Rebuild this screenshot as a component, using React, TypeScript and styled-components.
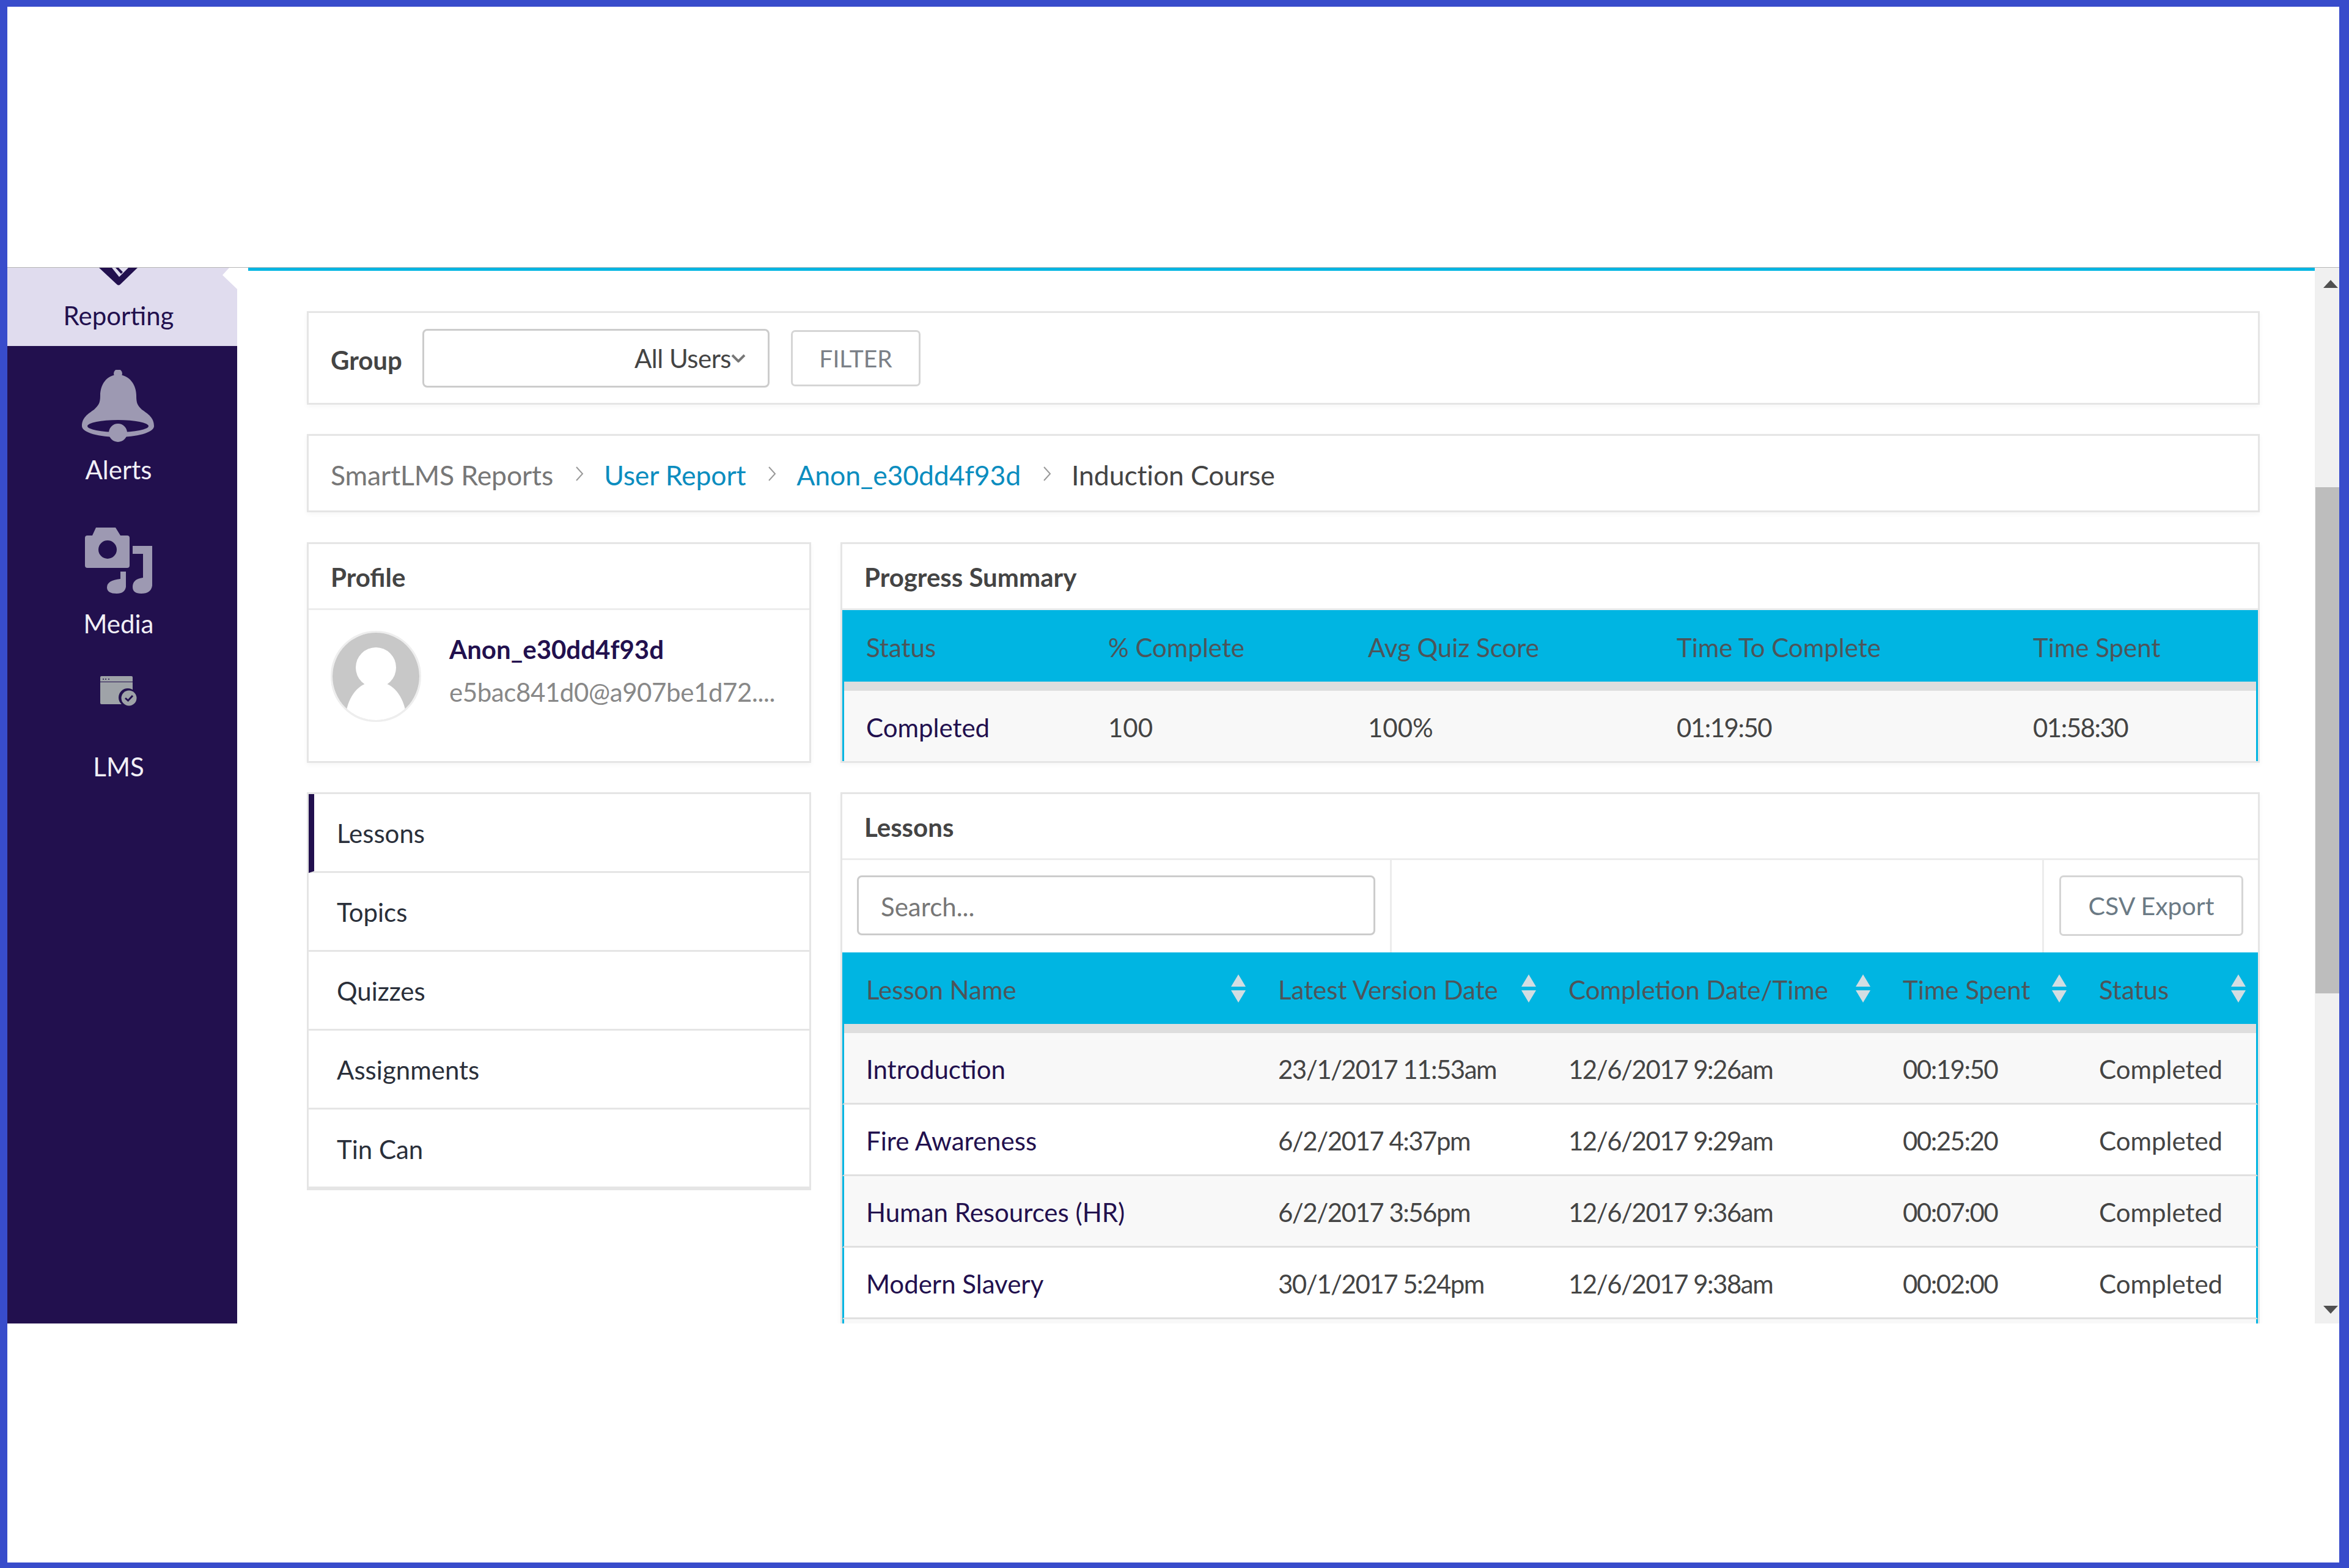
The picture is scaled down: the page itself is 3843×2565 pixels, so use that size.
import React from 'react';
import styled, { createGlobalStyle } from 'styled-components';

const FONT = `Lato, "Open Sans", "Liberation Sans", sans-serif`;
const CYAN = '#00b5e2';
const PURPLE = '#22104e';
const LINE = '#e5e5e5';

const GlobalStyle = createGlobalStyle`
  html, body { margin: 0; padding: 0; background: #fff; }
  body {
    font-family: ${FONT};
    font-size: 42px;
    color: #444;
  }
  * { box-sizing: border-box; }
`;

const Frame = styled.div`
  width: 3843px;
  height: 2565px;
  border-style: solid;
  border-color: #384ccb;
  border-width: 11px 16px 9px 12px;
  background: #fff;
  display: flex;
  flex-direction: column;
  overflow: hidden;
`;

const TopBlank = styled.div`
  height: 427px;
  flex: none;
  border-bottom: 1px solid #b5b5b5;
`;

const Shell = styled.div`
  height: 1727px;
  flex: none;
  display: flex;
  overflow: hidden;
`;

const Sidebar = styled.nav`
  width: 376px;
  flex: none;
  background: ${PURPLE};
  display: flex;
  flex-direction: column;
  padding-right: 12px;
`;

const ReportingItem = styled.div`
  position: relative;
  height: 128px;
  margin-right: -12px;
  padding-right: 12px;
  background: #e0dcee;
  color: ${PURPLE};
  display: flex;
  flex-direction: column;
  align-items: center;

  &::after {
    content: '';
    position: absolute;
    top: 0;
    right: 0;
    width: 24px;
    height: 35px;
    background: #fff;
    clip-path: polygon(11px 0, 0 12px, 24px 35px, 24px 0);
  }
`;

const ReportingLabel = styled.span`
  margin-top: 23px;
  line-height: 50px;
`;

const SideItem = styled.div<{ $top: number; $gap: number }>`
  margin-top: ${(p) => p.$top}px;
  display: flex;
  flex-direction: column;
  align-items: center;
  gap: ${(p) => p.$gap}px;
  color: #f1eff6;
  line-height: 50px;
`;

const Content = styled.main`
  flex: 1;
  min-width: 0;
  overflow: hidden;
  padding-left: 18px;
`;

const TopBar = styled.div`
  height: 5px;
  background: ${CYAN};
`;

const ContentInner = styled.div`
  padding: 66px 90px 0 96px;
  display: flex;
  flex-direction: column;
  gap: 48px;
`;

const Card = styled.section`
  border: 3px solid ${LINE};
  background: #fff;
  box-shadow: 0 3px 8px rgba(0, 0, 0, 0.04);
`;

const FilterCard = styled(Card)`
  height: 153px;
  display: flex;
  align-items: center;
  padding-left: 36px;
`;

const GroupLabel = styled.span`
  font-weight: 700;
  color: #444;
  width: 150px;
  padding-top: 7px;
`;

const SelectBox = styled.div`
  width: 568px;
  height: 96px;
  border: 3px solid #ccc;
  border-radius: 8px;
  display: flex;
  align-items: center;
  justify-content: flex-end;
  padding-right: 36px;
  color: #444;
  letter-spacing: -0.5px;
`;

const OutlineButton = styled.button`
  font: inherit;
  color: #7b8087;
  background: #fff;
  border: 3px solid #d5d5d5;
  border-radius: 7px;
  display: flex;
  align-items: center;
  justify-content: center;
`;

const FilterButton = styled(OutlineButton)`
  width: 212px;
  height: 92px;
  margin-left: 35px;
  font-size: 39px;
`;

const Crumbs = styled(Card)`
  height: 128px;
  display: flex;
  align-items: center;
  padding: 5px 0 0 36px;
  font-size: 44.6px;
`;

const Crumb = styled.span<{ $kind: 'muted' | 'link' | 'current' }>`
  color: ${(p) => (p.$kind === 'muted' ? '#777' : p.$kind === 'link' ? '#0b8dbf' : '#444')};
  letter-spacing: -0.15px;
`;

const CrumbSep = styled.svg`
  width: 14px;
  height: 26px;
  margin: 0 33px 4px 36px;
  flex: none;
`;

const Columns = styled.div`
  margin-top: 1px;
  display: grid;
  grid-template-columns: 825px 2322px;
  column-gap: 48px;
  row-gap: 48px;
`;

const CardTitle = styled.h2`
  margin: 0;
  height: 108px;
  padding: 2px 0 0 36px;
  display: flex;
  align-items: center;
  font: inherit;
  font-weight: 700;
  color: #444;
  border-bottom: 3px solid #ececec;
`;

const ProfileCard = styled(Card)`
  height: 361px;
`;

const ProfileBody = styled.div`
  display: flex;
  gap: 46px;
  padding: 34px 0 0 36px;
`;

const ProfileText = styled.div`
  min-width: 0;
  width: 540px;
  padding-top: 5px;
  display: flex;
  flex-direction: column;
  gap: 20px;
`;

const ProfileName = styled.div`
  color: ${PURPLE};
  font-weight: 700;
  line-height: 50px;
`;

const ProfileMail = styled.div`
  color: #888;
  line-height: 50px;
  white-space: nowrap;
  letter-spacing: -0.4px;
`;

const SummaryCard = styled(Card)`
  height: 361px;
  overflow: hidden;
`;

const TableRow = styled.div<{ $cols: string }>`
  display: grid;
  grid-template-columns: ${(p) => p.$cols};
  align-items: center;
`;

const HeadRow = styled(TableRow)`
  height: 117px;
  background: ${CYAN};
  color: #4d5459;
  padding-left: 3px;
  padding-right: 3px;
`;

const HeadCell = styled.div`
  padding: 0 16px 0 36px;
  display: flex;
  align-items: center;
  justify-content: space-between;
  white-space: nowrap;
`;

const HeadText = styled.span`
  padding-top: 5px;
`;

const SortIcon = styled.svg`
  width: 26px;
  height: 46px;
  flex: none;
`;

const Band = styled.div`
  height: 15px;
  background: #dedede;
  border-left: 3px solid ${CYAN};
  border-right: 3px solid ${CYAN};
`;

const BodyRow = styled(TableRow)<{ $odd: boolean }>`
  height: 117px;
  background: ${(p) => (p.$odd ? '#f8f8f8' : '#fff')};
  border-left: 3px solid ${CYAN};
  border-right: 3px solid ${CYAN};
  border-bottom: 3px solid #e0e0e0;
`;

const SummaryRow = styled(BodyRow)`
  border-bottom: 0;
`;

const Cell = styled.div<{ $primary?: boolean; $num?: boolean }>`
  padding: 3px 0 0 36px;
  white-space: nowrap;
  color: ${(p) => (p.$primary ? PURPLE : '#444')};
  letter-spacing: ${(p) => (p.$num ? '-1.5px' : '0')};
`;

const SideMenu = styled.ul`
  list-style: none;
  margin: 0;
  padding: 0;
  height: 651px;
  border: 3px solid ${LINE};
  border-bottom-width: 6px;
`;

const MenuItem = styled.li<{ $active?: boolean }>`
  height: 129px;
  display: flex;
  align-items: center;
  padding-top: 1px;
  padding-left: ${(p) => (p.$active ? '37px' : '46px')};
  color: #2a2f3a;
  border-left: ${(p) => (p.$active ? `9px solid ${PURPLE}` : '0')};
  border-bottom: 3px solid ${LINE};

  &:last-child {
    border-bottom: 0;
  }
`;

const LessonsCard = styled(Card)`
  height: 900px;
`;

const Toolbar = styled.div`
  height: 151px;
  display: flex;
`;

const SearchCell = styled.div`
  width: 899px;
  padding: 25px 0 0 24px;
  border-right: 3px solid #ececec;
`;

const SearchBox = styled.div`
  width: 848px;
  height: 98px;
  border: 3px solid #ccc;
  border-radius: 8px;
  padding: 3px 0 0 36px;
  display: flex;
  align-items: center;
  color: #777;
`;

const ToolbarGap = styled.div`
  width: 1067px;
  border-right: 3px solid #ececec;
`;

const ExportCell = styled.div`
  flex: 1;
  padding: 25px 0 0 25px;
`;

const ExportButton = styled(OutlineButton)`
  width: 301px;
  height: 99px;
  color: #6b7a85;
  font-size: 41px;
`;

const ScrollBar = styled.div`
  width: 40px;
  flex: none;
  background: #f0f0f0;
  display: flex;
  flex-direction: column;
  align-items: flex-end;
`;

const ArrowUp = styled.div`
  margin: 20px 2px 0 0;
  border-left: 12.5px solid transparent;
  border-right: 12.5px solid transparent;
  border-bottom: 13px solid #505050;
`;

const Thumb = styled.div`
  margin-top: 326px;
  width: 39px;
  height: 828px;
  background: #bdbdbd;
`;

const ArrowDown = styled.div`
  margin: auto 2px 16px 0;
  border-left: 12.5px solid transparent;
  border-right: 12.5px solid transparent;
  border-top: 13px solid #505050;
`;

const ICON = '#9d99b2';

const Sort = () => (
  <SortIcon viewBox="0 0 26 46">
    <path d="M13 0 L25 20 H1 Z" fill="#d3dde2" />
    <path d="M13 46 L25 26 H1 Z" fill="#d3dde2" />
  </SortIcon>
);

const Sep = () => (
  <CrumbSep viewBox="0 0 14 26">
    <path d="M2 2 L12 13 L2 24" fill="none" stroke="#999" strokeWidth="2" />
  </CrumbSep>
);

const ReportIcon = () => (
  <svg width="64" height="30" viewBox="0 0 64 30">
    <path d="M0 0 H63 L35 27 Q32 30 29 27 Z" fill={PURPLE} />
    <path d="M21 0 L33 15 L48 0 Z" fill="#e0dcee" />
    <path d="M27 0 L36 10 L39 7 L32 0 Z" fill={PURPLE} />
  </svg>
);

const BellIcon = () => (
  <svg width="120" height="118" viewBox="0 0 120 118">
    <circle cx="59" cy="6" r="7" fill={ICON} />
    <path
      fillRule="evenodd"
      fill={ICON}
      d="M59 8 C40 8 30 25 30 42 C30 55 27 58 20 65 C10 72 0 78 0 92 C0 103 30 110 59 110 C88 110 118 103 118 92 C118 78 108 72 98 65 C91 58 89 55 89 42 C89 25 78 8 59 8 Z M9 92 A50 10 0 1 0 109 92 A50 10 0 1 0 9 92 Z"
    />
    <circle cx="59" cy="103" r="15" fill={ICON} />
  </svg>
);

const MediaIcon = () => (
  <svg width="110" height="108" viewBox="0 0 110 108">
    <path
      fillRule="evenodd"
      fill={ICON}
      d="M18 0 H50 L58 13 H69 Q73 13 73 17 V62 Q73 66 69 66 H4 Q0 66 0 62 V17 Q0 13 4 13 H12 Z M37 21 A15 15 0 1 0 37 51 A15 15 0 1 0 37 21 Z"
    />
    <path fill={ICON} d="M78 30 H110 V95 Q108 108 92 108 Q78 108 78 97 Q78 84 95 82 V43 H78 Z" />
    <path fill={ICON} d="M67 72 V97 Q65 108 52 108 Q36 108 36 98 Q36 86 58 84 V72 Z" />
  </svg>
);

const LmsIcon = () => (
  <svg width="60" height="49" viewBox="0 0 60 49">
    <path d="M2 0 H51 Q53 0 53 2 V9 H0 V2 Q0 0 2 0 Z" fill="#9fa3a8" />
    <path d="M0 10 H53 V46 H2 Q0 46 0 44 Z" fill="#9fa3a8" />
    <circle cx="5" cy="5" r="1" fill={PURPLE} />
    <circle cx="9" cy="5" r="1" fill={PURPLE} />
    <circle cx="14" cy="5" r="1" fill={PURPLE} />
    <circle cx="45" cy="35" r="15" fill={PURPLE} />
    <circle cx="47" cy="36" r="12.5" fill="#9fa3a8" />
    <path d="M41 36 L45.5 40 L53 32" fill="none" stroke={PURPLE} strokeWidth="3" />
  </svg>
);

const Avatar = () => (
  <svg width="148" height="149" viewBox="0 0 148 149">
    <defs>
      <clipPath id="avatar-clip">
        <ellipse cx="74" cy="74.5" rx="71" ry="71.5" />
      </clipPath>
    </defs>
    <ellipse cx="74" cy="74.5" rx="72.5" ry="73" fill="#fff" stroke="#eee" strokeWidth="3" />
    <g clipPath="url(#avatar-clip)">
      <rect width="148" height="149" fill="#c8c8c8" />
      <ellipse cx="74" cy="60" rx="33" ry="33" fill="#fff" />
      <path d="M24 149 C24 110 45 88 62 85 H86 C103 88 124 110 124 149 Z" fill="#fff" />
    </g>
  </svg>
);

const SUMMARY_COLS = '396px 425px 505px 583px 401px';
const LESSON_COLS = '674px 475px 547px 321px 293px';

const lessons = [
  ['Introduction', '23/1/2017 11:53am', '12/6/2017 9:26am', '00:19:50', 'Completed'],
  ['Fire Awareness', '6/2/2017 4:37pm', '12/6/2017 9:29am', '00:25:20', 'Completed'],
  ['Human Resources (HR)', '6/2/2017 3:56pm', '12/6/2017 9:36am', '00:07:00', 'Completed'],
  ['Modern Slavery', '30/1/2017 5:24pm', '12/6/2017 9:38am', '00:02:00', 'Completed'],
  ['', '', '', '', ''],
];

const menu = ['Lessons', 'Topics', 'Quizzes', 'Assignments', 'Tin Can'];

export default function App() {
  return (
    <>
      <GlobalStyle />
      <Frame>
        <TopBlank />
        <Shell>
          <Sidebar>
            <ReportingItem>
              <ReportIcon />
              <ReportingLabel>Reporting</ReportingLabel>
            </ReportingItem>
            <SideItem $top={39} $gap={20}>
              <BellIcon />
              <span>Alerts</span>
            </SideItem>
            <SideItem $top={70} $gap={24}>
              <MediaIcon />
              <span>Media</span>
            </SideItem>
            <SideItem $top={61} $gap={74}>
              <LmsIcon />
              <span>LMS</span>
            </SideItem>
          </Sidebar>
          <Content>
            <TopBar />
            <ContentInner>
              <FilterCard>
                <GroupLabel>Group</GroupLabel>
                <SelectBox>
                  All Users
                  <svg width="24" height="14" viewBox="0 0 24 14">
                    <path d="M2 2 L12 12 L22 2" fill="none" stroke="#777" strokeWidth="4" />
                  </svg>
                </SelectBox>
                <FilterButton>FILTER</FilterButton>
              </FilterCard>
              <Crumbs>
                <Crumb $kind="muted">SmartLMS Reports</Crumb>
                <Sep />
                <Crumb $kind="link">User Report</Crumb>
                <Sep />
                <Crumb $kind="link">Anon_e30dd4f93d</Crumb>
                <Sep />
                <Crumb $kind="current">Induction Course</Crumb>
              </Crumbs>
              <Columns>
                <ProfileCard>
                  <CardTitle>Profile</CardTitle>
                  <ProfileBody>
                    <Avatar />
                    <ProfileText>
                      <ProfileName>Anon_e30dd4f93d</ProfileName>
                      <ProfileMail>e5bac841d0@a907be1d72....</ProfileMail>
                    </ProfileText>
                  </ProfileBody>
                </ProfileCard>
                <SummaryCard>
                  <CardTitle>Progress Summary</CardTitle>
                  <HeadRow $cols={SUMMARY_COLS}>
                    {['Status', '% Complete', 'Avg Quiz Score', 'Time To Complete', 'Time Spent'].map((h) => (
                      <HeadCell key={h}>
                        <HeadText>{h}</HeadText>
                      </HeadCell>
                    ))}
                  </HeadRow>
                  <Band />
                  <SummaryRow $cols={SUMMARY_COLS} $odd>
                    <Cell $primary>Completed</Cell>
                    <Cell>100</Cell>
                    <Cell>100%</Cell>
                    <Cell $num>01:19:50</Cell>
                    <Cell $num>01:58:30</Cell>
                  </SummaryRow>
                </SummaryCard>
                <SideMenu>
                  {menu.map((m, i) => (
                    <MenuItem key={m} $active={i === 0}>
                      {m}
                    </MenuItem>
                  ))}
                </SideMenu>
                <LessonsCard>
                  <CardTitle>Lessons</CardTitle>
                  <Toolbar>
                    <SearchCell>
                      <SearchBox>Search...</SearchBox>
                    </SearchCell>
                    <ToolbarGap />
                    <ExportCell>
                      <ExportButton>CSV Export</ExportButton>
                    </ExportCell>
                  </Toolbar>
                  <HeadRow $cols={LESSON_COLS}>
                    {['Lesson Name', 'Latest Version Date', 'Completion Date/Time', 'Time Spent', 'Status'].map((h) => (
                      <HeadCell key={h}>
                        <HeadText>{h}</HeadText>
                        <Sort />
                      </HeadCell>
                    ))}
                  </HeadRow>
                  <Band />
                  {lessons.map((row, i) => (
                    <BodyRow key={i} $cols={LESSON_COLS} $odd={i % 2 === 0}>
                      {row.map((c, j) => (
                        <Cell key={j} $primary={j === 0} $num={j >= 1 && j <= 3}>
                          {c}
                        </Cell>
                      ))}
                    </BodyRow>
                  ))}
                </LessonsCard>
              </Columns>
            </ContentInner>
          </Content>
          <ScrollBar>
            <ArrowUp />
            <Thumb />
            <ArrowDown />
          </ScrollBar>
        </Shell>
      </Frame>
    </>
  );
}
